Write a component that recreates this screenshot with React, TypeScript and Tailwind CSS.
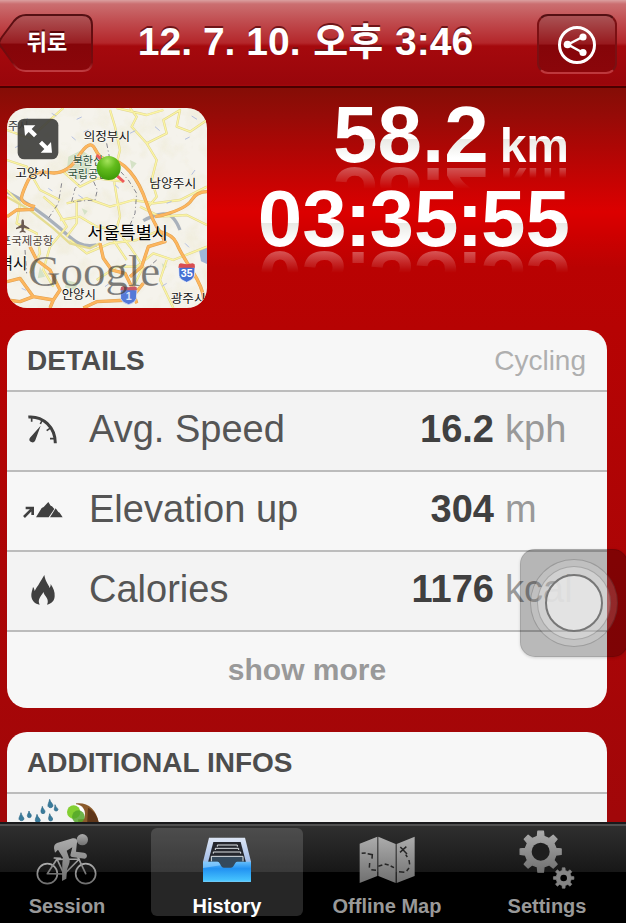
import type { ReactNode } from 'react';

interface Metric {
  label: string;
  value: string;
  unit: string;
  icon: ReactNode;
  shade: string;
}

const digits =
  'inline-block bg-clip-text text-transparent bg-[linear-gradient(180deg,#fff_56%,#e9e9e4_57%,#fff_88%)] leading-[60px] h-[60px]';

// Closed outline of a gear with trapezoid teeth
function gearPath(cx: number, cy: number, outer: number, inner: number, teeth = 8): string {
  const pts: string[] = [];
  const step = (Math.PI * 2) / teeth;
  for (let i = 0; i < teeth; i++) {
    const a = i * step - Math.PI / 2;
    const corners: [number, number][] = [[-0.27, inner], [-0.17, outer], [0.17, outer], [0.27, inner]];
    corners.forEach(([t, r]) => {
      pts.push(`${(cx + Math.cos(a + t * step) * r).toFixed(1)} ${(cy + Math.sin(a + t * step) * r).toFixed(1)}`);
    });
  }
  return `M${pts.join('L')}Z`;
}

function SpeedIcon() {
  return (
    <svg className="w-[32px] h-[32px]" viewBox="84 280 96 96" fill="none" stroke="#404040">
      <path d="M88 289Q121 286 145 309T169 368" strokeWidth="9" />
      <path d="M98 290v13M130 298l-6 12M156 321l-13 9M168 354h-15" strokeWidth="5" />
      <path d="M125 315L109 359a9 9 0 1 1-16-8z" fill="#404040" stroke="none" />
    </svg>
  );
}

function ElevationIcon() {
  return (
    <svg className="w-[40px] h-[18px]" viewBox="70 56 120 54" fill="#404040">
      <path d="M73 104l22-22M78 77h21v21" fill="none" stroke="#404040" strokeWidth="8" />
      <path d="M109 105L126 77L132 74L146 59L153 70L157 72L164 80L147 105Z" />
      <path d="M151 105L168 78L176 89L180 91L189 105Z" />
    </svg>
  );
}

function FlameIcon() {
  return (
    <svg className="w-[24px] h-[30px]" viewBox="94 281 72 90" fill="#404040">
      <path d="M134 281c3 20 12 27 16 39 3-5 3-8 3-12 8 12 13 23 12 37-1 14-9 22-23 25 4-7 3-15-2-22-3-5-7-9-9-16-3 7-8 12-11 18-4 7-3 14 0 20-14-2-23-11-25-25-1-10 3-17 5-28 3 3 4 7 5 12 4-10 9-14 15-25 5-8 9-14 14-23z" />
    </svg>
  );
}

const metrics: Metric[] = [
  { label: 'Avg. Speed', value: '16.2', unit: 'kph', icon: <SpeedIcon />, shade: 'bg-[#f3f3f3]' },
  { label: 'Elevation up', value: '304', unit: 'm', icon: <ElevationIcon />, shade: 'bg-[#f7f7f7]' },
  { label: 'Calories', value: '1176', unit: 'kcal', icon: <FlameIcon />, shade: 'bg-[#f3f3f3]' },
];

function CyclistIcon() {
  return (
    <svg className="w-[64px] h-[56px]" viewBox="105 52 192 168" fill="none" stroke="url(#tabGrey)" strokeLinejoin="round" strokeLinecap="round">
      <circle cx="142" cy="177" r="30" strokeWidth="5" />
      <circle cx="257" cy="177" r="30" strokeWidth="5" />
      <path d="M142 177l29-44 21 46 46-46-66 1M142 177l50 1M233 126l24 51M163 130l18 1" strokeWidth="5" />
      <circle cx="247" cy="75" r="17" fill="url(#tabGrey)" stroke="none" />
      <path d="M162 101c0-8 2-13 9-16l47-14c9-2 15 3 13 12l-3 28 24 3c11 2 12 15 2 18l-38-5c-5-2-6-5-4-10l5-19-17 10 9 27c1 10-5 20-8 30l-2 27-13 7 1-54 2-16-15-24-9 9z" fill="url(#tabGrey)" stroke="none" />
    </svg>
  );
}

function TrayIcon() {
  return (
    <svg className="w-[56px] h-[56px]" viewBox="597 52 168 168">
      <defs>
        <linearGradient id="trayFront" x1="0" y1="0" x2="0" y2="1">
          <stop offset="0" stopColor="#65bdfa" />
          <stop offset=".35" stopColor="#2292f2" />
          <stop offset="1" stopColor="#49c8ff" />
        </linearGradient>
        <linearGradient id="trayRim" x1="0" y1="0" x2="0" y2="1">
          <stop offset="0" stopColor="#dde6f5" />
          <stop offset=".5" stopColor="#a8c0e8" />
          <stop offset="1" stopColor="#328be8" />
        </linearGradient>
      </defs>
      <path d="M627 69h108l18 72v60H609v-60z" fill="url(#trayRim)" />
      <path d="M640 82h82l17 65H623z" fill="#24262d" />
      <path d="M634 125h95l5 36H630z" fill="#34495c" />
      <path d="M652 96v-5h60v5M646 106v-5h70v5M640 117v-5h82v5M634 140v-15h95v15" fill="none" stroke="#dce1e5" strokeWidth="3" />
      <path d="M609 141h43q4 0 6 4l6 10q2 4 7 4h22q5 0 7-4l6-10q2-4 6-4h41v60H609z" fill="url(#trayFront)" />
      <path d="M609 141h43q4 0 6 4l4 7-53 8z" fill="#9bd4ff" opacity=".6" />
      <path d="M610 200h142" stroke="#8fdcff" strokeWidth="2" />
    </svg>
  );
}

function MapTabIcon() {
  return (
    <svg className="w-[56px] h-[56px]" viewBox="136 56 168 168">
      <path d="M138 91l53-21v118l-53 21zM194 70l52 22v117l-52-21zM249 92l54-22v118l-54 21z" fill="url(#tabGrey)" />
      <path d="M144 120l12-1M162 121l14 3-1 12M168 149l-1 14M173 169l14 2M194 159l12-4M213 152l12 3M231 158l10 5M256 175l16 2M279 173l7-9M288 153l-2-13M281 131l-5-7M260 101l20 21M278 100l-19 17" fill="none" stroke="#262626" strokeWidth="4.5" />
    </svg>
  );
}

function GearsIcon() {
  return (
    <svg className="w-[56px] h-[60px]" viewBox="619 46 168 180" fill="none">
      <path d={gearPath(684, 111, 62, 47)} fill="url(#tabGrey)" stroke="url(#tabGrey)" strokeWidth="4" strokeLinejoin="round" />
      <circle cx="684" cy="111" r="27" fill="#1e1e1e" />
      <path d={gearPath(753, 190, 31, 23)} fill="#858585" stroke="#858585" strokeWidth="2" strokeLinejoin="round" />
      <circle cx="753" cy="190" r="10" fill="#000" />
    </svg>
  );
}

const tabs = [
  { label: 'Session', icon: <CyclistIcon />, active: false },
  { label: 'History', icon: <TrayIcon />, active: true },
  { label: 'Offline Map', icon: <MapTabIcon />, active: false },
  { label: 'Settings', icon: <GearsIcon />, active: false },
];

const places = [
  { name: '주시', x: 24, y: 89, size: 34, width: 62, fill: '#333' },
  { name: '의정부시', x: 251, y: 123, size: 37, width: 139, fill: '#111' },
  { name: '북한산', x: 218, y: 194, size: 33, width: 92, fill: '#2f4f3a' },
  { name: '국립공원', x: 203, y: 234, size: 33, width: 122, fill: '#2f4f3a' },
  { name: '고양시', x: 46, y: 234, size: 36, width: 105, fill: '#111' },
  { name: '남양주시', x: 448, y: 265, size: 37, width: 141, fill: '#111' },
  { name: '서울특별시', x: 262, y: 417, size: 52, width: 242, fill: '#000' },
  { name: '포국제공항', x: 2, y: 434, size: 33, width: 158, fill: '#4c4038' },
  { name: '역시', x: -4, y: 508, size: 48, width: 86, fill: '#111' },
  { name: '안양시', x: 185, y: 598, size: 36, width: 103, fill: '#111' },
  { name: '광주시', x: 512, y: 609, size: 36, width: 105, fill: '#111' },
];

const minorRoads =
  'M20 90L90 115L150 60L190 24M390 24L410 50L395 80L440 130L470 180L455 240L470 290L445 320M440 130L500 100L490 60L540 30L530 80L570 95L621 60M330 30L345 80L360 150L340 230L350 290L360 350M190 215L240 260L290 235L370 245M130 290L165 320L200 380L150 440L130 510L160 560M200 310L260 295L330 320L400 300L460 310L540 300L621 260M180 360L240 350L290 380L350 390L390 440L430 500L400 560M20 270L60 310L50 370L110 400L120 460L90 520M290 540L350 500L410 500L460 460L520 480L621 440M210 420L260 460L330 430L410 420L480 390M350 24L440 45L490 30M230 300L230 370L200 410M360 350L340 420L380 480M20 180L80 200L120 270L180 300M500 480L480 540L520 624M420 320L480 350L560 345L621 375';

const highways =
  'M21 350L50 330L102 328M105 320Q60 310 65 290T85 240T150 218T235 170T285 147T330 180T390 215T440 310T480 395Q520 405 530 430T575 510T612 600M621 275Q590 275 575 300T490 345L465 350M300 430L310 475L335 510L375 520L395 560L410 610M480 395L495 425L445 440L425 500L390 530M21 545L60 535L100 590L160 600L180 570L150 510L110 480L90 440M100 590L60 605L21 600M160 600L150 624M250 624L290 605L390 600L430 550';

function MapThumbnail() {
  return (
    <div className="size-[200px] shrink-0 rounded-[20px] overflow-hidden">
      <svg className="size-full" viewBox="21 24 600 600" fill="none">
        <defs>
          <filter id="terrain" x="0" y="0" width="1" height="1">
            <feTurbulence type="fractalNoise" baseFrequency=".018" numOctaves="3" seed="9" />
            <feColorMatrix values="0 0 0 0 .86  0 0 0 0 .83  0 0 0 0 .68  3 0 0 0 -1.35" />
          </filter>
          <radialGradient id="pin" cx=".45" cy=".2" r=".8">
            <stop stopColor="#a5e45c" />
            <stop offset=".45" stopColor="#62bb1c" />
            <stop offset="1" stopColor="#3f9a08" />
          </radialGradient>
        </defs>
        <rect x="21" y="24" width="600" height="600" fill="#f5f3ec" />
        <rect x="21" y="24" width="600" height="600" filter="url(#terrain)" opacity=".6" />
        <path d="M205 170l40-20 35 25-15 50-35 15-30-25zM120 500l15 30-22 5zM390 180l20 10-15 18zM200 540l35 10-10 20-30-8zM245 325l18 8-9 12zM485 490l16 8-10 15z" fill="#d5e2c6" />
        <path d="M20 275C90 310 140 350 180 385S240 445 290 435M430 362Q460 345 490 342T540 390" stroke="#a9b1bb" strokeWidth="10" />
        <path d="M597 450l24-8v50l-18-8z" fill="#9fb6d8" />
        <path d={minorRoads} stroke="#e0d58f" strokeWidth="7" strokeLinejoin="round" />
        <path d={minorRoads} stroke="#fbf5a4" strokeWidth="4" strokeLinejoin="round" />
        <path d="M20 290L90 330L160 385L210 430L270 445L300 430" stroke="#e5dc91" strokeWidth="7" />
        <path d={highways} stroke="#e0a050" strokeWidth="10" strokeLinejoin="round" />
        <path d={highways} stroke="#fdb65e" strokeWidth="7" strokeLinejoin="round" />
        <path d="M185 250L175 310L145 355M215 305L225 265L270 220L292 270L285 300L215 305M320 130L330 180L385 240L410 280L405 340L390 375M470 480L430 515M75 450L80 520" stroke="#85858d" strokeWidth="3" strokeDasharray="14 8 3 8" />
        <path d="M70 62l14-6M155 40l14 8M230 58l15-7M265 90l-14 6M215 110l12 10M390 100l16-8M575 48l16 10M555 118l14-7M465 80l14 12M60 135l-15 8M585 210l-10 14M500 310l15-6M235 285l14 10M145 265l12 8M555 430l12 12M500 550l-14 9M315 560l12-9M65 565l13 6M345 255l12 10" stroke="#b4bfe0" strokeWidth="3" />
        <g fontFamily="'Noto Sans CJK KR', sans-serif" fontWeight="400" stroke="#fff" strokeWidth="4" strokeOpacity=".6" paintOrder="stroke" strokeLinejoin="round">
          {places.map((p) => (
            <text key={p.name} x={p.x} y={p.y} fontSize={p.size} textLength={p.width} lengthAdjust="spacingAndGlyphs" fill={p.fill}>{p.name}</text>
          ))}
        </g>
        <path d="M68 358q4 0 4 8v8l16 10v4l-16-5-1 8 6 4v3l-9-2-9 2v-3l6-4-1-8-16 5v-4l16-10v-8q0-8 4-8z" fill="#6b5a50" />
        <path d="M290 165l12 12M343 220l29 26" stroke="#ee5a5a" strokeWidth="9" />
        <circle cx="326" cy="204" r="36" fill="url(#pin)" />
        <path d="M536 502q24-8 49 0l-2 26q-3 12-23 19-20-7-23-19z" fill="#446fd4" stroke="#fff" strokeWidth="2" />
        <path d="M537 493l5-3q18 5 36 0l6 3 1 10h-50z" fill="#d94e50" />
        <text x="560" y="532" textAnchor="middle" fontFamily="'Liberation Sans', sans-serif" fontWeight="700" fontSize="32" fill="#fff">35</text>
        <path d="M361 570q24-8 50 0l-2 26q-3 12-23 18-20-6-24-18z" fill="#5579d8" stroke="#fff" strokeWidth="2" />
        <path d="M363 562l5-3q18 5 36 0l6 3 1 9h-50z" fill="#c85a68" />
        <text x="386" y="599" textAnchor="middle" fontFamily="'Liberation Sans', sans-serif" fontWeight="700" fontSize="32" fill="#d7e0fa">1</text>
        <text x="84" y="557" textLength="397" lengthAdjust="spacingAndGlyphs" fontFamily="'Liberation Serif', serif" fontSize="134" fill="#3c3c3c" fillOpacity=".66" stroke="#fff" strokeWidth="1" strokeOpacity=".4">Google</text>
        <rect x="53" y="56" width="122" height="122" rx="20" fill="#3c3c3a" fillOpacity=".9" />
        <path d="M72 76h34l-11 11 16 16-9 9-16-16-11 12zM156 158h-34l11-11-16-16 9-9 16 16 11-12z" fill="#fff" />
      </svg>
    </div>
  );
}

function Header() {
  return (
    <header className="h-[88px] shrink-0 flex items-start justify-between pt-[13px] pr-[9px] border-b-2 border-[#4a0000] bg-[linear-gradient(180deg,#dba0a0_0px,#cb6e70_4px,#c04b4e_22px,#b4262a_43px,#a5090d_46px,#99060b_84px,#a5080c_86px)] text-white">
      <button className="w-[94px] h-[61px] grid place-items-center">
        <svg className="col-start-1 row-start-1 w-[94px] h-[61px]" viewBox="0 0 94 61">
          <defs>
            <linearGradient id="back" x1="0" y1="0" x2="0" y2="1">
              <stop offset="0" stopColor="#b05658" />
              <stop offset=".5" stopColor="#981d21" />
              <stop offset=".52" stopColor="#850509" />
              <stop offset="1" stopColor="#8b060a" />
            </linearGradient>
            <linearGradient id="backEdge" x1="0" y1="0" x2="0" y2="1">
              <stop offset="0" stopColor="#541013" />
              <stop offset=".85" stopColor="#7b0a0d" />
              <stop offset="1" stopColor="#c03c41" />
            </linearGradient>
          </defs>
          <path d="M-1 30Q0 27 2 24L14 8Q19 2 26 2H82Q92 2 92 12V48Q92 58 82 58H26Q19 58 15 53L2 35Q0 33-1 30Z" fill="url(#back)" stroke="url(#backEdge)" strokeWidth="2" />
        </svg>
        <span className="col-start-1 row-start-1 pb-px font-bold text-[22px] leading-[30px] [text-shadow:0_-2px_0_#5a0508]">뒤로</span>
      </button>
      <h1 className="pt-[5px] -ml-[20px] flex items-baseline text-[39px] leading-[48px] font-bold whitespace-pre [text-shadow:0_-2px_0_#6f1518]">
        12. 7. 10. <span className="ml-[2px] mr-px text-[38px] font-bold">오후</span> 3:46
      </h1>
      <button className="w-[80px] h-[60px] mt-px rounded-[11px] border-2 border-t-[#541013] border-x-[#7b1013] border-b-[#bd383d] bg-[linear-gradient(180deg,#aa5355,#97191d_50%,#850509_52%,#8b060a)] flex items-center justify-center">
        <svg className="size-[40px] mt-px" viewBox="0 0 40 40" fill="none" stroke="#fff">
          <circle cx="20" cy="20" r="17.5" strokeWidth="3" />
          <path d="M25.5 12L11 19.5l14.5 8" strokeWidth="2.5" />
          <g fill="#fff" stroke="none">
            <circle cx="26" cy="12" r="3.6" />
            <circle cx="10.5" cy="19.5" r="3.8" />
            <circle cx="26" cy="27.5" r="3.6" />
          </g>
        </svg>
      </button>
    </header>
  );
}

export default function App() {
  return (
    <div className="relative w-[626px] h-[923px] overflow-hidden flex flex-col font-['Liberation_Sans','Noto_Sans_CJK_KR',sans-serif]">
      <Header />

      <main className="flex-1 min-h-0 overflow-hidden px-[7px] bg-[linear-gradient(180deg,#850d06_0px,#960b07_28px,#b90504_75px,#dc0000_124px,#cf0000_145px,#b90202_180px,#b60303_240px,#a10709_730px)]">
        <section className="flex justify-between h-[242px] pt-[20px]">
          <MapThumbnail />
          <div className="-mt-[3px] pr-[49px] flex flex-col items-end gap-[24px] font-bold">
            <div className="flex h-[60px] mr-px">
              <span className={`${digits} text-[80px] [-webkit-box-reflect:below_0px_linear-gradient(transparent_60%,rgba(255,255,255,.36))]`}>58.2</span>
              <span className={`${digits} ml-[11px] text-[48px] leading-[82px] [-webkit-box-reflect:below_0px_linear-gradient(transparent_78%,rgba(255,255,255,.36))]`}>km</span>
            </div>
            <div className={`${digits} text-[80px] whitespace-nowrap [-webkit-box-reflect:below_0px_linear-gradient(transparent_60%,rgba(255,255,255,.36))]`}>
              03<span className="-mx-[2px]">:</span>35<span className="-mx-[2px]">:</span>55
            </div>
          </div>
        </section>

        {/* Details */}
        <section className="w-[600px] rounded-[20px] overflow-hidden bg-[#f7f7f7]">
          <div className="h-[60px] pt-[2px] pl-[20px] pr-[21px] flex items-center justify-between text-[28px]">
            <h2 className="font-bold text-[#4d4d4d]">DETAILS</h2>
            <span className="text-[#afafaf]">Cycling</span>
          </div>
          {metrics.map((m) => (
            <div key={m.label} className={`h-[80px] border-t-2 border-[#bcbcbc] flex items-center pb-[3px] text-[38px] ${m.shade}`}>
              <div className="w-[72px] flex justify-center">{m.icon}</div>
              <span className="w-[230px] ml-[10px] text-[#555] whitespace-nowrap">{m.label}</span>
              <span className="w-[175px] text-right font-bold text-[#404040]">{m.value}</span>
              <span className="ml-[11px] text-[#999]">{m.unit}</span>
            </div>
          ))}
          <button className="w-full h-[78px] pb-px border-t-2 border-[#bcbcbc] font-bold text-[30px] text-[#999]">show more</button>
        </section>

        {/* Additional infos */}
        <section className="w-[600px] h-[200px] mt-[24px] rounded-t-[20px] overflow-hidden bg-[#f7f7f7]">
          <div className="h-[58px] pt-[2px] pl-[20px] flex items-center text-[28px] border-b-2 border-[#bcbcbc] box-content">
            <h2 className="font-bold text-[#4d4d4d]">ADDITIONAL INFOS</h2>
          </div>
          <div className="h-[80px] pl-[10px] bg-[#f3f3f3]">
            <svg className="w-[90px] h-[40px]" viewBox="51 219 270 120">
              <g fill="#397b9b" stroke="#2d6886" strokeWidth="2">
                <path d="M63 275c2 10 9 14 9 19a8 7 0 0 1-15 1c-1-6 4-11 6-20z" />
                <path d="M87 270c1 7 7 9 7 14a6 6 0 0 1-12 0c0-4 4-8 5-14z" />
                <path d="M111 280c2 9 10 13 10 19a8 7 0 0 1-15 1c-1-6 3-11 5-20z" />
                <path d="M127 256c1 8 8 10 8 16a6 6 0 0 1-12 0c-1-5 3-9 4-16z" />
                <path d="M149 235c2 9 10 13 10 20a8 7 0 0 1-15 1c-1-7 3-11 5-21z" />
                <path d="M165 251c2 8 9 10 9 15a6 6 0 0 1-11 1c-1-4 2-9 2-16z" />
                <path d="M149 278c2 8 9 11 9 16a6 6 0 0 1-12 0c-1-5 2-9 3-16z" />
              </g>
              <path d="M228 247c38-5 67 22 69 70h-60z" fill="#8b5a2b" />
              <path d="M264 260c24 13 33 35 33 57h-36z" fill="#5e3518" />
              <path d="M224 250c24-1 37 20 28 44l-30 2z" fill="#fff" />
              <circle cx="221" cy="273" r="20" fill="#83cf32" />
              <circle cx="235" cy="287" r="19" fill="#55a62a" opacity=".85" />
            </svg>
          </div>
        </section>
      </main>

      {/* Tab bar */}
      <nav className="h-[101px] shrink-0 w-[640px] -ml-[13px] grid grid-cols-4 bg-[linear-gradient(180deg,#1a1a1c_0_2px,#505050_2px_4px,#2f2f2f_4px,#171717_50px,#000_50px)]">
        <svg className="absolute size-0">
          <defs>
            <linearGradient id="tabGrey" x1="0" y1="0" x2="0" y2="1">
              <stop offset="0" stopColor="#acacac" />
              <stop offset="1" stopColor="#707070" />
            </linearGradient>
          </defs>
        </svg>
        {tabs.map((tab) => (
          <button
            key={tab.label}
            className={`w-[152px] h-[88px] mt-[6px] mx-[4px] rounded-[6px] flex flex-col items-center justify-end font-bold text-[20px] whitespace-nowrap ${
              tab.active ? 'bg-white/15 text-white' : 'text-[#999]'
            }`}
          >
            <span className="h-[64px] shrink-0 flex items-center">{tab.icon}</span>
            <span className="h-[24px] leading-[28px]">{tab.label}</span>
          </button>
        ))}
      </nav>

      {/* Floating touch button, sits over the page */}
      <div className="absolute left-[520px] top-[549px] size-[108px] rounded-[15px] bg-black/25 border border-black/10 shadow-[0_1px_3px_rgba(0,0,0,.15)] grid place-items-center">
        <div className="size-[88px] rounded-full border border-black/20 bg-white/15 grid place-items-center">
          <div className="size-[74px] rounded-full border border-black/20 bg-white/25 grid place-items-center">
            <div className="size-[58px] rounded-full border-2 border-[#777] bg-[#e6e6e6]/85" />
          </div>
        </div>
      </div>
    </div>
  );
}
